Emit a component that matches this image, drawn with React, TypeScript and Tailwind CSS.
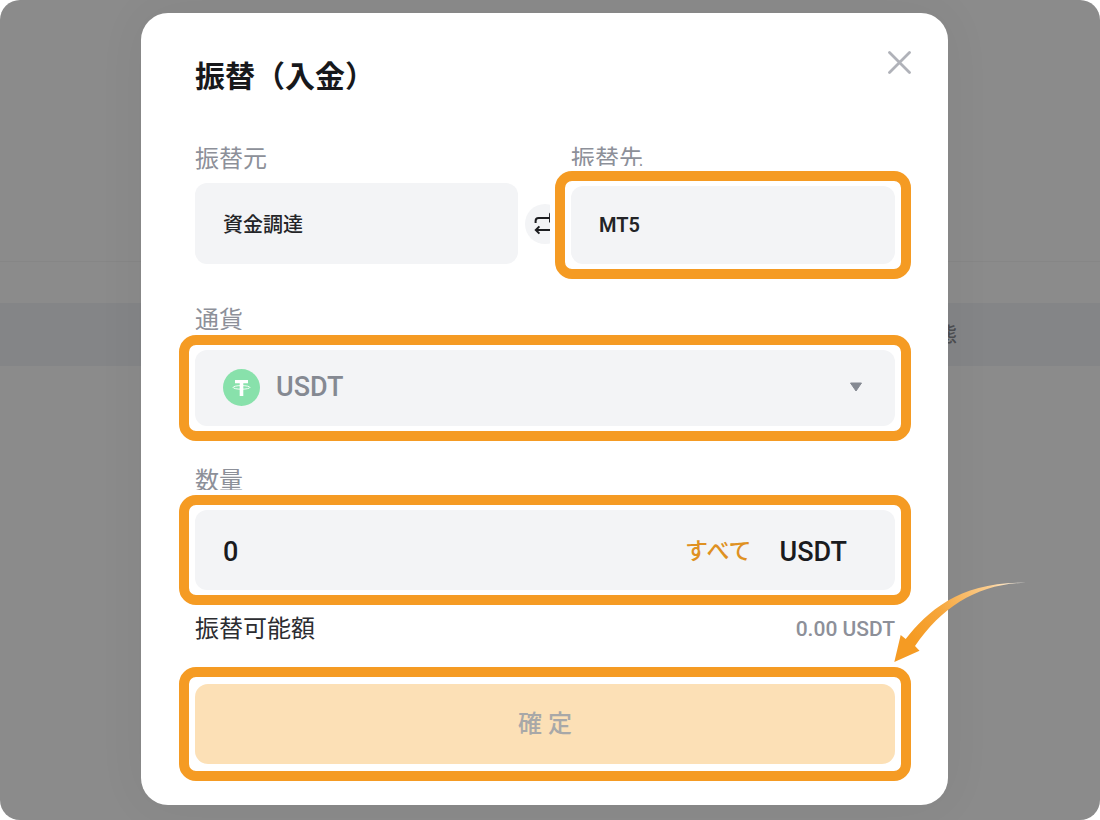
import { useState } from "react"
import type { ReactNode } from "react"
import clsx from "clsx"

function Highlight({ className, children }: { className?: string; children: ReactNode }) {
  return (
    <div
      className={clsx(
        "relative rounded-[17px] border-10 border-[#f59b23] bg-white px-[6px] ring-[5px] ring-white",
        className,
      )}
    >
      {children}
    </div>
  )
}

function FieldLabel({ htmlFor, children }: { htmlFor: string; children: ReactNode }) {
  return (
    <label htmlFor={htmlFor} className="block px-4 text-[24px] leading-6 text-[#8d9099]">
      {children}
    </label>
  )
}

function SwapIcon() {
  return (
    <svg viewBox="0 0 24 24" className="size-6" fill="none" stroke="#1c1d20" strokeWidth="2">
      <path d="M2.6 11V9q0-3 3-3H17" />
      <path d="M16.6 1.4v8.8L21.4 6z" fill="#1c1d20" strokeWidth="1" />
      <path d="M21.4 13v2q0 3-3 3H3" />
      <path d="M6.4 14.4 2.8 18l3.6 3.6" />
    </svg>
  )
}

function TetherIcon() {
  return (
    <svg viewBox="0 0 37 37" className="size-[37px] shrink-0" aria-hidden="true">
      <circle cx="18.5" cy="18.5" r="18.5" fill="#88e1ab" />
      <path d="M12 11h13v3.2h-4.7V27h-3.6V14.2H12z" fill="#fff" />
      <ellipse cx="18.5" cy="18.4" rx="8.4" ry="1.8" fill="none" stroke="#fff" strokeWidth="0.9" />
    </svg>
  )
}

function PointerArrow() {
  return (
    <svg
      viewBox="0 0 132 80"
      className="pointer-events-none absolute -top-[35px] -right-[115px] z-10 h-20 w-[132px]"
      aria-hidden="true"
    >
      <defs>
        <linearGradient id="pointer" gradientUnits="userSpaceOnUse" x1="22" y1="62" x2="128" y2="0">
          <stop offset="0" stopColor="#f59b23" />
          <stop offset="0.3" stopColor="#f6a63b" />
          <stop offset="0.75" stopColor="#fbcd8f" />
          <stop offset="1" stopColor="#fffaf2" />
        </linearGradient>
      </defs>
      <path
        d="M0.3 80 6.7 53l5 4C34 28 68-1 132 0.7 84 2 49 24 21 64l4.5 4.7z"
        fill="url(#pointer)"
      />
    </svg>
  )
}

function Backdrop() {
  return (
    <div className="absolute inset-0 overflow-hidden rounded-[20px] bg-[#8b8b8b]" aria-hidden="true">
      <div className="h-[262px] border-b border-[#868686]" />
      <div className="mt-[41px] flex h-[63px] items-center justify-end bg-[#848587] pr-[143px] text-[20px] font-medium text-[#4c4d50]">
        態
      </div>
    </div>
  )
}

export default function App() {
  const [amount, setAmount] = useState("0")

  return (
    <main className="relative min-h-screen bg-white pt-[13px] pr-[152px] pb-[15px] pl-[141px] font-['Roboto','Noto_Sans_CJK_JP',sans-serif]">
      <Backdrop />
      <div
        role="dialog"
        aria-labelledby="title"
        className="relative rounded-[27px] bg-white pt-[38px] pr-[37px] pb-6 pl-[38px] shadow-[0_0_50px_rgba(0,0,0,0.05)]"
      >
        <header className="flex items-start justify-between">
          <h1 id="title" className="mt-[6px] pl-4 text-[30px] leading-10 font-bold text-[#17181b]">
            振替（入金）
          </h1>
          <button type="button" aria-label="閉じる">
            <svg viewBox="0 0 24 24" className="size-6" stroke="#b0b2b9" strokeWidth="2.8">
              <path d="M2.5 1.5l20 20M22.5 1.5l-20 20" strokeLinecap="round" />
            </svg>
          </button>
        </header>

        <div className="mt-[50px] grid grid-cols-[339fr_37px_356fr]">
          <div>
            <FieldLabel htmlFor="from">振替元</FieldLabel>
            <input
              id="from"
              readOnly
              value="資金調達"
              className="mt-3 ml-4 block h-[81px] w-[calc(100%-16px)] rounded-[12px] bg-[#f3f4f6] px-7 text-[20px] font-medium text-[#232427] outline-none"
            />
          </div>
          <button
            type="button"
            aria-label="入れ替え"
            className="mt-[57px] ml-[7px] flex size-10 items-center justify-center rounded-full bg-[#f3f4f6]"
          >
            <SwapIcon />
          </button>
          <div>
            <FieldLabel htmlFor="to">振替先</FieldLabel>
            <Highlight className="py-[5px]">
              <input
                id="to"
                readOnly
                value="MT5"
                className="block h-[78px] w-full rounded-[12px] bg-[#f3f4f6] px-7 text-[20px] font-semibold text-[#232427] outline-none"
              />
            </Highlight>
          </div>
        </div>

        <div className="mt-[29px]">
          <FieldLabel htmlFor="currency">通貨</FieldLabel>
          <Highlight className="mt-[3px] py-[5px]">
            <div className="flex h-[76px] items-center gap-4 rounded-[12px] bg-[#f3f4f6] pr-8 pb-[2px] pl-7">
              <TetherIcon />
              <select
                id="currency"
                className="min-w-0 flex-1 appearance-none bg-transparent text-[27px] font-medium text-[#858992] outline-none"
              >
                <option>USDT</option>
              </select>
              <svg viewBox="0 0 14 10" className="pointer-events-none h-[10px] w-[14px]" aria-hidden="true">
                <path d="M1.5 1h11L7 9z" fill="#858992" stroke="#858992" strokeLinejoin="round" />
              </svg>
            </div>
          </Highlight>
        </div>

        <div className="mt-7">
          <FieldLabel htmlFor="amount">数量</FieldLabel>
          <Highlight className="mt-[2px] py-[5px]">
            <div className="flex h-20 items-center rounded-[12px] bg-[#f3f4f6] pt-1 pr-12 pl-7 text-[27px] font-medium text-[#1a1b1e]">
              <input
                id="amount"
                value={amount}
                onChange={(e) => setAmount(e.target.value)}
                className="min-w-0 flex-1 bg-transparent outline-none"
              />
              <button type="button" className="mr-7 text-[23px] text-[#df9122]" onClick={() => setAmount("0.00")}>
                すべて
              </button>
              <span>USDT</span>
            </div>
          </Highlight>
        </div>

        <div className="relative mt-3 flex items-center justify-between px-4 leading-6">
          <span className="text-[24px] text-[#2c2d31]">振替可能額</span>
          <span className="text-[21px] font-medium text-[#8d9099]">0.00 USDT</span>
          <PointerArrow />
        </div>

        <Highlight className="mt-[26px] py-[7px]">
          <button
            type="button"
            className="block h-20 w-full rounded-[13px] bg-[#fce0b6] text-[24px] font-medium text-[#a8a8a8]"
          >
            確 定
          </button>
        </Highlight>
      </div>
    </main>
  )
}
